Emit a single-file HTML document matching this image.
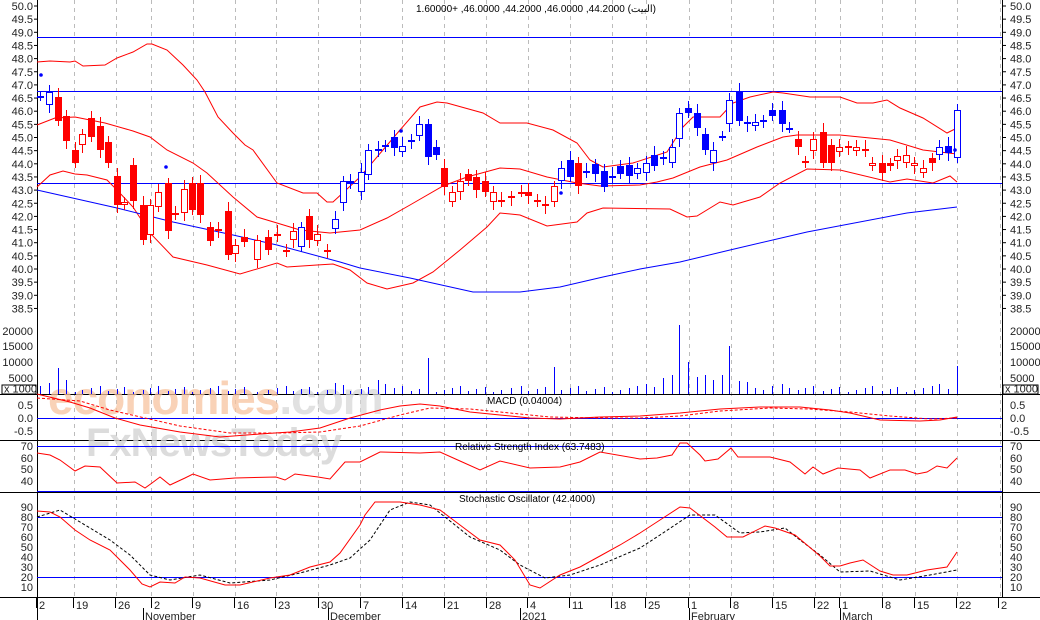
<!DOCTYPE html>
<html><head><meta charset="utf-8"><style>
html,body{margin:0;padding:0;background:#fff}
svg{display:block;font-family:"Liberation Sans",sans-serif}
</style></head><body>
<svg id="s" width="1040" height="620" viewBox="0 0 1040 620" xmlns="http://www.w3.org/2000/svg">
<rect width="1040" height="620" fill="#fff"/>
<g id="grid"></g>
<!-- watermark -->
<text x="48" y="414" font-size="46" fill="#f7c4a0" opacity="0.75" font-weight="bold" letter-spacing="-1">economies<tspan fill="#d8d8d8">.com</tspan></text>
<text x="86" y="456" font-size="40" fill="#d4d4d4" opacity="0.8" font-weight="bold" letter-spacing="-1">FxNewsToday</text>
<g id="lines"></g>
<g id="cand"></g>
<g id="txt" font-size="11" fill="#222"></g>
<text x="416" y="12" font-size="10" fill="#000">1.60000+ ,46.0000 ,44.2000 ,46.0000 ,44.2000 (البيت)</text>
<text x="487" y="404" font-size="10" fill="#000">MACD (0.04004)</text>
<text x="455" y="450" font-size="10" fill="#000">Relative Strength Index (63.7483)</text>
<text x="459" y="502" font-size="10" fill="#000">Stochastic Oscillator (42.4000)</text>
</svg>
<script>
var NS="http://www.w3.org/2000/svg";
function el(p,t,a,tx){var e=document.createElementNS(NS,t);for(var k in a)e.setAttribute(k,a[k]);if(tx!=null)e.textContent=tx;document.getElementById(p).appendChild(e);return e;}
function pl(p,pts,c,w,d){el(p,"polyline",{points:pts.map(function(q){return q.join(",")}).join(" "),fill:"none",stroke:c,"stroke-width":w||1,"stroke-dasharray":d||""});}
// grid
var gx=[74,116,151,193,235,276,318,360,402,444,486,528,570,612,646,689,731,773,815,840,882,915,957,1000];
gx.forEach(function(x){el("grid","line",{x1:x+.5,y1:0,x2:x+.5,y2:597,stroke:"#bbb","stroke-dasharray":"4,4"});});
// axes borders
el("grid","line",{x1:37.5,y1:0,x2:37.5,y2:620,stroke:"#000"});
el("grid","line",{x1:1002.5,y1:0,x2:1002.5,y2:597,stroke:"#000"});
[394.5,440.5,492.5,597.5].forEach(function(y){el("grid","line",{x1:0,y1:y,x2:1040,y2:y,stroke:"#000"});});
// horizontal blue lines
[[37,91],[183],[418],[446],[491],[517],[577]].forEach(function(a){});
[37,91,183].forEach(function(y){el("lines","line",{x1:37,y1:y+.5,x2:1002,y2:y+.5,stroke:"#00f"});});
[418,446,491,517,577].forEach(function(y){el("lines","line",{x1:37,y1:y+.5,x2:1002,y2:y+.5,stroke:"#00f"});});
// bands
pl("lines",[[37,62],[50,61],[70,62],[75,61],[83,66],[105,65],[117,58],[133,52],[147,44],[152,44],[167,50],[183,65],[197,80],[205,92],[218,117],[233,133],[245,145],[253,150],[277,183],[303,193],[317,193],[327,202],[333,202],[360,177],[400,130],[420,107],[437,102],[447,103],[483,113],[500,123],[527,123],[553,130],[577,143],[590,160],[603,167],[633,163],[667,152],[683,127],[693,117],[720,117],[733,103],[750,97],[773,92],[783,93],[810,97],[840,97],[857,103],[873,103],[887,100],[900,108],[923,118],[947,133],[957,128]],"#f00");
pl("lines",[[37,125],[55,118],[75,117],[105,123],[133,131],[150,137],[167,150],[193,163],[207,173],[233,197],[257,217],[277,223],[300,230],[330,233],[360,230],[387,218],[410,205],[443,186],[467,177],[500,168],[520,169],[547,177],[577,183],[600,186],[640,185],[657,182],[673,178],[700,167],[727,160],[757,147],[783,137],[797,135],[840,135],[890,140],[923,150],[957,154]],"#f00");
pl("lines",[[37,187],[50,175],[63,171],[75,174],[87,175],[107,180],[117,190],[133,207],[150,233],[173,257],[207,265],[240,274],[277,263],[287,267],[317,265],[333,264],[350,270],[367,283],[387,289],[413,283],[433,272],[460,250],[487,227],[500,213],[520,215],[547,226],[577,222],[587,213],[603,208],[670,209],[687,217],[697,216],[720,202],[733,205],[760,197],[780,183],[807,169],[840,170],[890,182],[907,179],[933,183],[950,176],[957,182]],"#f00");
pl("lines",[[37,190],[117,208],[173,222],[233,235],[277,245],[340,262],[360,268],[410,278],[473,292],[520,292],[560,287],[603,277],[640,269],[680,262],[730,250],[807,232],[907,213],[957,207]],"#00f");
// candles
var C=[[40,96,96,'b',1],[49,92,105,'b',0],[58,97,121,'r',1],[66,116,141,'r',1],[75,150,163,'r',1],[82,134,145,'r',0],[91,118,137,'r',1],[100,126,150,'r',1],[108,142,163,'r',1],[117,176,205,'r',1],[124,202,205,'r',0],[133,165,201,'r',1],[143,205,240,'r',1],[150,205,235,'r',0],[158,192,207,'r',0],[168,183,231,'r',1],[175,213,215,'r',1],[184,189,213,'r',0],[192,183,210,'r',1],[200,183,215,'r',1],[210,227,241,'r',1],[218,229,230,'r',1],[228,211,255,'r',1],[235,245,254,'r',0],[244,237,242,'r',1],[257,240,260,'r',0],[268,237,250,'r',1],[277,234,234,'r',1],[286,250,252,'r',1],[293,231,240,'r',0],[301,227,247,'b',0],[309,216,240,'r',1],[317,234,241,'r',0],[327,250,250,'r',1],[335,219,229,'b',0],[343,181,203,'b',0],[350,181,184,'b',1],[361,172,192,'b',0],[368,150,175,'b',0],[378,149,149,'b',1],[385,145,147,'b',0],[394,137,148,'b',1],[402,146,152,'b',0],[411,140,141,'b',1],[419,124,136,'b',0],[428,124,157,'b',1],[436,147,155,'b',1],[444,168,187,'r',1],[452,192,202,'r',0],[460,181,192,'r',0],[468,174,181,'r',1],[476,177,190,'r',1],[485,181,192,'r',1],[493,192,202,'r',0],[501,200,202,'r',1],[511,196,198,'r',1],[521,192,192,'r',1],[528,192,196,'r',1],[537,200,202,'r',1],[545,204,206,'r',1],[554,186,202,'r',0],[561,168,181,'b',0],[570,160,177,'b',1],[578,163,186,'r',1],[586,171,173,'b',0],[595,164,174,'b',1],[604,171,187,'b',1],[612,176,176,'b',1],[620,166,174,'b',1],[629,165,176,'b',1],[637,168,174,'b',0],[646,163,173,'b',0],[654,155,166,'b',1],[663,157,157,'b',1],[672,147,163,'b',0],[679,113,139,'b',0],[688,108,113,'b',1],[697,113,128,'b',1],[705,134,150,'b',1],[713,150,163,'b',0],[722,136,136,'b',1],[729,100,124,'b',0],[739,92,121,'b',1],[747,122,124,'b',0],[755,122,126,'b',0],[763,120,120,'b',1],[772,110,116,'b',1],[782,110,124,'b',1],[789,128,128,'b',1],[798,139,147,'r',1],[805,161,163,'r',0],[813,139,151,'r',0],[823,132,163,'r',1],[831,145,163,'r',1],[839,147,152,'r',0],[848,146,147,'r',0],[856,147,151,'r',0],[865,149,149,'r',1],[872,163,166,'r',0],[882,163,173,'r',1],[890,163,166,'r',1],[897,156,161,'r',0],[906,155,163,'r',0],[914,163,166,'r',0],[923,168,173,'r',0],[932,158,163,'r',1],[939,147,155,'b',0],[948,146,153,'b',1],[957,110,158,'b',0]];
var vol={49:383,57:368,66:380,335:383,343:385,377:380,385:384,427:358,553:367,646:384,654:387,663:378,672:375,679:325,688:362,697:377,705:375,713:380,722:375,731:346,739:381,747:382,755:388,763:390,772:386,782:384,789:388,957:366,939:384};
C.forEach(function(c,i){
 var col=c[3]=='b'?'#00f':'#f00',x=c[0];
 var hi=c[1]-5-(i*7%5),lo=c[2]+5+(i*3%6);
 el("cand","line",{x1:x+.5,y1:hi,x2:x+.5,y2:lo,stroke:col});
 var h=c[2]-c[1];
 if(h<2){el("cand","rect",{x:x-3,y:c[1],width:7,height:2,fill:col});}
 else if(c[4]) el("cand","rect",{x:x-3,y:c[1],width:7,height:h,fill:col});
 else el("cand","rect",{x:x-2.5,y:c[1]+.5,width:6,height:h-1,fill:"#fff",stroke:col});
 var vt=null;for(var k in vol){if(Math.abs(k-x)<3)vt=vol[k];}
 if(vt==null)vt=386+(i*5%7);
 el("cand","line",{x1:x+.5,y1:vt,x2:x+.5,y2:394,stroke:"#00f"});
});
[[41,75],[166,167],[401,131],[561,193],[955,150]].forEach(function(p){el("cand","circle",{cx:p[0],cy:p[1],r:1.8,fill:"#00f"});});
// MACD
pl("lines",[[37,394],[70,402],[90,408],[115,418],[140,425],[180,432],[220,437],[260,434],[290,432],[320,428],[350,418],[380,410],[400,406],[420,404],[440,406],[470,412],[500,415],[530,418],[560,419],[600,417],[640,416],[680,413],[720,409],[760,407],[800,407],[830,410],[850,413],[880,420],[920,421],[940,420],[957,417]],"#f00");
pl("lines",[[37,398],[80,401],[110,410],[145,418],[180,426],[230,433],[280,433],[320,432],[360,426],[400,415],[430,408],[470,409],[510,413],[550,417],[600,418],[640,418],[680,416],[720,411],[770,408],[810,409],[850,412],[890,416],[930,419],[957,418]],"#f00",1,"3,2");
// RSI
pl("lines",[[37,453],[50,455],[60,460],[75,471],[85,466],[100,467],[117,483],[135,482],[145,488],[152,483],[160,477],[170,485],[185,478],[193,474],[210,480],[235,478],[276,477],[285,480],[295,474],[318,477],[330,479],[345,462],[360,462],[380,452],[420,453],[440,452],[460,461],[480,470],[500,461],[530,468],[560,467],[580,462],[600,452],[640,459],[657,458],[672,455],[680,443],[687,443],[700,455],[705,461],[718,459],[731,448],[738,457],[770,457],[790,462],[805,474],[813,467],[823,474],[838,468],[860,470],[870,478],[890,470],[905,470],[917,474],[927,472],[937,466],[947,468],[957,458]],"#f00");
// Stoch
pl("lines",[[37,517],[60,510],[80,522],[110,540],[130,555],[150,575],[170,580],[200,575],[230,583],[270,580],[300,573],[330,565],[350,558],[370,540],[390,510],[410,502],[430,505],[470,537],[500,550],[520,565],[545,578],[570,575],[600,565],[640,548],[660,535],[690,515],[715,515],[740,533],[760,532],[785,528],[800,540],[820,555],[840,572],[870,571],[900,580],[930,575],[957,570]],"#000",1,"3,2");
pl("lines",[[37,511],[50,512],[60,517],[75,530],[90,540],[110,550],[130,570],[142,584],[150,587],[160,582],[175,583],[185,577],[200,578],[225,585],[240,585],[270,578],[290,575],[310,567],[330,562],[340,553],[360,525],[365,515],[375,502],[400,502],[420,505],[440,510],[460,525],[480,540],[500,545],[515,560],[530,585],[540,588],[560,575],[580,567],[600,556],[620,545],[640,533],[660,520],[680,507],[690,508],[715,527],[727,537],[743,537],[765,526],[775,528],[795,535],[807,545],[820,556],[830,566],[840,566],[850,563],[863,560],[880,571],[893,575],[907,575],[927,570],[947,567],[957,552]],"#f00");
// axis labels
function lab(x,y,t,a){el("txt","text",{x:x,y:y,"text-anchor":a||"start"},t);}
for(var v=50;v>=38.5;v-=0.5){var y=6+(50-v)*26.3;var t=v.toFixed(1);lab(33,y+4,t,"end");lab(1010,y+4,t);
 el("txt","line",{x1:34,y1:y,x2:37,y2:y,stroke:"#000"});el("txt","line",{x1:1002,y1:y,x2:1006,y2:y,stroke:"#000"});}
[[20000,331],[15000,346],[10000,362],[5000,378]].forEach(function(a){lab(33,a[1]+4,a[0],"end");lab(1010,a[1]+4,a[0]);});
el("txt","rect",{x:2,y:385,width:34,height:9,fill:"#fff",stroke:"#000"});lab(4,392.5,"x 1000");
el("txt","rect",{x:1003,y:385,width:35,height:9,fill:"#fff",stroke:"#000"});lab(1005,392.5,"x 1000");
[["0.5",405],["0.0",418],["-0.5",431]].forEach(function(a){lab(33,a[1]+4,a[0],"end");lab(1010,a[1]+4,a[0]);});
[[70,446],[60,458],[50,469],[40,481]].forEach(function(a){lab(33,a[1]+4,a[0],"end");lab(1010,a[1]+4,a[0]);});
for(var s=90;s>=10;s-=10){var y=597-s;lab(33,y+4,s,"end");lab(1010,y+4,s);}
var dl=[[38,"2"],[75,"19"],[117,"26"],[153,"2"],[194,"9"],[236,"16"],[277,"23"],[320,"30"],[362,"7"],[404,"14"],[446,"21"],[488,"28"],[529,"4"],[571,"11"],[613,"18"],[647,"25"],[690,"1"],[732,"8"],[774,"15"],[816,"22"],[841,"1"],[884,"8"],[916,"15"],[958,"22"],[1000,"2"]];
dl.forEach(function(d){lab(d[0]+1,609,d[1]);el("txt","line",{x1:d[0]-1.5,y1:598,x2:d[0]-1.5,y2:608,stroke:"#000"});});
[[143,"November"],[328,"December"],[520,"2021"],[689,"February"],[840,"March"]].forEach(function(m){lab(m[0]+2,620,m[1]);el("txt","line",{x1:m[0]+.5,y1:608,x2:m[0]+.5,y2:620,stroke:"#000"});});
</script>
</body></html>
